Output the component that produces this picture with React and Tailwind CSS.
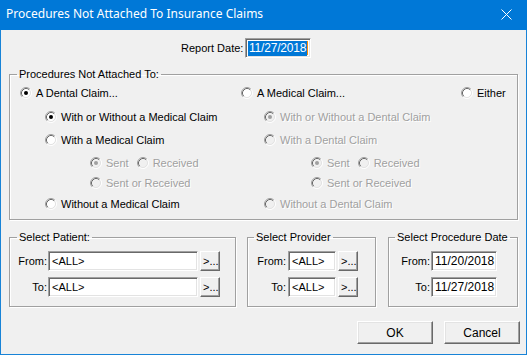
import React from 'react';

const FONT = "font-['Liberation_Sans',Arial,sans-serif]";

function RadioDot({ checked, disabled }) {
    return (
        <svg width="12" height="12" viewBox="0 0 12 12" className="shrink-0">
            <circle cx="6" cy="6" r="4.2" fill={disabled ? '#f0f0f0' : '#ffffff'} />
            <path d="M2.11 9.89 A5.5 5.5 0 0 1 9.89 2.11" fill="none" stroke="#a0a0a0" strokeWidth="1" />
            <path d="M9.89 2.11 A5.5 5.5 0 0 1 2.11 9.89" fill="none" stroke="#ffffff" strokeWidth="1" />
            <path d="M2.82 9.18 A4.5 4.5 0 0 1 9.18 2.82" fill="none" stroke="#696969" strokeWidth="1" />
            <path d="M9.18 2.82 A4.5 4.5 0 0 1 2.82 9.18" fill="none" stroke="#e3e3e3" strokeWidth="1" />
            {checked && <circle cx="6" cy="6" r="2" fill={disabled ? '#a0a0a0' : '#000000'} />}
        </svg>
    );
}

function Radio({ label, checked, disabled }) {
    return (
        <div className="flex items-center gap-[4px] whitespace-nowrap">
            <RadioDot checked={checked} disabled={disabled} />
            <span className={disabled ? 'text-[#a0a0a0] [text-shadow:1px_1px_0_#ffffff]' : 'text-black'}>{label}</span>
        </div>
    );
}

function Field({ value, width, size = 'text-[11px]' }) {
    return (
        <div
            className={`${width} ${size} h-[20px] bg-white border border-t-[#a0a0a0] border-l-[#a0a0a0] border-r-white border-b-white shadow-[inset_1px_1px_0_#696969,inset_-1px_-1px_0_#e3e3e3] flex items-center pl-[3px] text-black whitespace-nowrap`}
        >
            {value}
        </div>
    );
}

function DotsButton() {
    return (
        <div className="w-[20px] h-[20px] bg-[#f0f0f0] border border-t-white border-l-white border-r-[#696969] border-b-[#696969] shadow-[inset_-1px_-1px_0_#a0a0a0] flex items-center pl-[2px] text-[11px] text-black">
            &gt;...
        </div>
    );
}

function Group({ title, className, children, legendClass = 'ml-[6px]' }) {
    return (
        <fieldset className={`border border-[#a0a0a0] shadow-[inset_1px_1px_0_#ffffff,1px_1px_0_#ffffff] ${className}`}>
            <legend className={`${legendClass} px-[2px] leading-[14px] text-[11px] text-black`}>{title}</legend>
            {children}
        </fieldset>
    );
}

function Row({ h, children }) {
    return <div className={`grid grid-cols-[221px_220px_1fr] items-center ${h}`}>{children}</div>;
}

function Button({ label }) {
    return (
        <div className="w-[76px] h-[23px] bg-[#f0f0f0] border border-t-white border-l-white border-r-[#696969] border-b-[#696969] shadow-[inset_-1px_-1px_0_#a0a0a0,inset_1px_1px_0_#e3e3e3] flex items-center justify-center text-[12px] text-black">
            {label}
        </div>
    );
}

export default function App() {
    return (
        <div className={`w-[527px] h-[355px] flex flex-col bg-[#f0f0f0] border border-t-0 border-[#1883d7] ${FONT} text-[11px] select-none`}>
            <div className="h-[30px] -mx-px bg-[#0078d7] flex items-start justify-between pt-[6px] pl-[6px] pr-[15px] shrink-0">
                <span className="text-white text-[12px] leading-[16px] font-['Noto_Sans',sans-serif]">
                    Procedures Not Attached To Insurance Claims
                </span>
                <svg width="11" height="11" viewBox="0 0 11 11" className="mt-[3px]">
                    <path d="M0.5 0.5 L10.5 10.5 M10.5 0.5 L0.5 10.5" stroke="#ffffff" strokeWidth="1" />
                </svg>
            </div>

            <div className="flex items-center pl-[180px] mt-[8px] h-[20px]">
                <span className="w-[64px] whitespace-nowrap">Report Date:</span>
                <div className="w-[66px] h-[20px] bg-white border border-t-[#a0a0a0] border-l-[#a0a0a0] border-r-white border-b-white shadow-[inset_1px_1px_0_#696969,inset_-1px_-1px_0_#e3e3e3] flex items-center pl-[2px]">
                    <span className="bg-[#0078d7] text-white text-[12px] leading-[15px] tracking-[-0.2px] pl-px pr-px">11/27/2018</span>
                    <span className="w-px h-[14px] bg-[#ff8c00]" />
                </div>
            </div>

            <Group title="Procedures Not Attached To:" className="ml-[8px] w-[509px] mt-[9px] pb-[2px]" legendClass="ml-[7px]">
                <div className="pl-[10px]">
                    <Row h="h-[24px]">
                        <Radio label="A Dental Claim..." checked />
                        <Radio label="A Medical Claim..." />
                        <Radio label="Either" />
                    </Row>
                    <Row h="h-[24px]">
                        <div className="ml-[25px]"><Radio label="With or Without a Medical Claim" checked /></div>
                        <div className="ml-[23px]"><Radio label="With or Without a Dental Claim" checked disabled /></div>
                    </Row>
                    <Row h="h-[22px]">
                        <div className="ml-[25px]"><Radio label="With a Medical Claim" /></div>
                        <div className="ml-[23px]"><Radio label="With a Dental Claim" disabled /></div>
                    </Row>
                    <Row h="h-[24px]">
                        <div className="ml-[70px] flex gap-[8px]">
                            <Radio label="Sent" checked disabled />
                            <Radio label="Received" disabled />
                        </div>
                        <div className="ml-[70px] flex gap-[8px]">
                            <Radio label="Sent" checked disabled />
                            <Radio label="Received" disabled />
                        </div>
                    </Row>
                    <Row h="h-[16px]">
                        <div className="ml-[70px]"><Radio label="Sent or Received" disabled /></div>
                        <div className="ml-[70px]"><Radio label="Sent or Received" disabled /></div>
                    </Row>
                    <Row h="h-[26px]">
                        <div className="ml-[25px]"><Radio label="Without a Medical Claim" /></div>
                        <div className="ml-[23px]"><Radio label="Without a Dental Claim" disabled /></div>
                    </Row>
                </div>
            </Group>

            <div className="flex mt-[10px] ml-[8px] gap-[11px]">
                <Group title="Select Patient:" className="w-[227px] h-[77px] pt-[7px]" legendClass="ml-[7px]">
                    <div className="flex flex-col gap-[6px]">
                        <div className="flex items-center">
                            <span className="w-[38px] text-right pr-px">From:</span>
                            <Field value="<ALL>" width="w-[150px]" />
                            <div className="ml-[2px]"><DotsButton /></div>
                        </div>
                        <div className="flex items-center">
                            <span className="w-[38px] text-right pr-px">To:</span>
                            <Field value="<ALL>" width="w-[150px]" />
                            <div className="ml-[2px]"><DotsButton /></div>
                        </div>
                    </div>
                </Group>
                <Group title="Select Provider" className="w-[129px] h-[77px] pt-[7px]" legendClass="ml-[6px]">
                    <div className="flex flex-col gap-[6px]">
                        <div className="flex items-center">
                            <span className="w-[40px] text-right pr-[2px]">From:</span>
                            <Field value="<ALL>" width="w-[48px]" />
                            <div className="ml-[2px]"><DotsButton /></div>
                        </div>
                        <div className="flex items-center">
                            <span className="w-[40px] text-right pr-[2px]">To:</span>
                            <Field value="<ALL>" width="w-[48px]" />
                            <div className="ml-[2px]"><DotsButton /></div>
                        </div>
                    </div>
                </Group>
                <Group title="Select Procedure Date" className="w-[130px] h-[77px] pt-[7px] ml-px" legendClass="ml-[6px]">
                    <div className="flex flex-col gap-[6px]">
                        <div className="flex items-center">
                            <span className="w-[42px] text-right pr-[1px]">From:</span>
                            <Field value="11/20/2018" width="w-[66px]" size="text-[12px]" />
                        </div>
                        <div className="flex items-center">
                            <span className="w-[42px] text-right pr-[1px]">To:</span>
                            <Field value="11/27/2018" width="w-[66px]" size="text-[12px]" />
                        </div>
                    </div>
                </Group>
            </div>

            <div className="flex justify-end gap-[11px] pr-[6px] mt-[14px]">
                <Button label="OK" />
                <Button label="Cancel" />
            </div>
        </div>
    );
}
